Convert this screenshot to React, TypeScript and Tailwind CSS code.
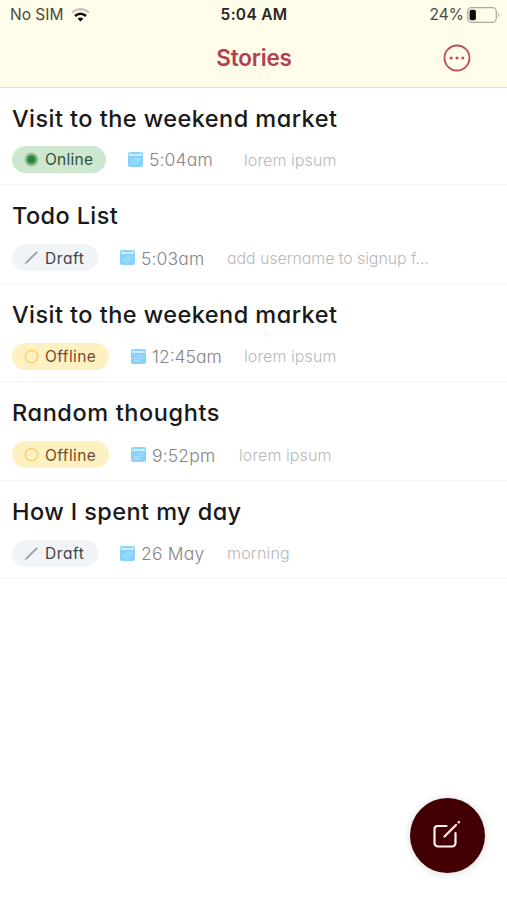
import clsx from "clsx";

type Status = "Online" | "Draft" | "Offline";

type Story = {
  title: string;
  titleClass: string;
  status: Status;
  date: string;
  dateClass: string;
  note: string;
  noteClass: string;
};

const stories: Story[] = [
  {
    title: "Visit to the weekend market",
    titleClass: "tracking-[0.45px] pt-px",
    status: "Online",
    date: "5:04am",
    dateClass: "w-[95px] tracking-[0.15px]",
    note: "lorem ipsum",
    noteClass: "tracking-[0.1px]",
  },
  {
    title: "Todo List",
    titleClass: "tracking-[0.4px]",
    status: "Draft",
    date: "5:03am",
    dateClass: "w-[86px] tracking-[0.15px]",
    note: "add username to signup f...",
    noteClass: "tracking-[-0.1px]",
  },
  {
    title: "Visit to the weekend market",
    titleClass: "tracking-[0.45px]",
    status: "Offline",
    date: "12:45am",
    dateClass: "w-[92px]",
    note: "lorem ipsum",
    noteClass: "tracking-[0.1px]",
  },
  {
    title: "Random thoughts",
    titleClass: "tracking-[0.6px]",
    status: "Offline",
    date: "9:52pm",
    dateClass: "w-[87px] tracking-[0.15px]",
    note: "lorem ipsum",
    noteClass: "tracking-[0.1px]",
  },
  {
    title: "How I spent my day",
    titleClass: "tracking-[0.42px]",
    status: "Draft",
    date: "26 May",
    dateClass: "w-[86px] tracking-[0.2px]",
    note: "morning",
    noteClass: "tracking-[0.2px]",
  },
];

const badgeStyles: Record<Status, string> = {
  Online: "w-[94px] bg-[#cde8cf] text-[#344d3b] tracking-[0.25px]",
  Draft: "w-[86px] bg-[#f1f4f6] text-[#3f4247] tracking-[0.6px]",
  Offline: "w-[97px] bg-[#fef1c1] text-[#75492f] tracking-[0.4px]",
};

function StatusIcon({ status }: { status: Status }) {
  return (
    <svg width="15" height="15" viewBox="0 0 15 15" fill="none">
      {status === "Online" && (
        <>
          <circle cx="7.5" cy="7.5" r="6.8" fill="#86bd8b" />
          <circle cx="7.5" cy="7.5" r="4.3" fill="#2f8540" />
        </>
      )}
      {status === "Draft" && (
        <path d="M1.2 13.5 2.3 11.5 12.6 1.5l1 1L3.3 12.6Z" fill="#a4a6aa" stroke="#a4a6aa" strokeWidth="0.8" />
      )}
      {status === "Offline" && <circle cx="7.5" cy="7.5" r="6.2" stroke="#fbcb5c" strokeWidth="1.3" />}
    </svg>
  );
}

function CalendarIcon() {
  return (
    <svg width="15" height="15" viewBox="0 0 15 15" className="shrink-0">
      <rect width="15" height="15" rx="2" fill="#87d1fb" />
      <path d="M1 3h13" stroke="#e0f4ff" strokeWidth="1.5" />
      <path d="M3 .5v1.4M12 .5v1.4" stroke="#c5eaff" />
      <path d="M6.5 7h6M3 9.3h8M3 11.6h6" stroke="#b3e2ff" strokeWidth="1.3" strokeDasharray="1.7 .5" />
    </svg>
  );
}

function StatusBar() {
  return (
    <div className="grid h-[30px] grid-cols-3 items-center pl-[10px] pr-[7px] text-[#4a4940]">
      <div className="flex items-center gap-2">
        <span className="text-[15.5px]">No SIM</span>
        <svg width="19" height="14" viewBox="0 0 19 14" fill="none">
          <path d="M1 4.7a12.3 12.3 0 0 1 17 0" stroke="#cbc9b9" strokeWidth="2.4" />
          <path d="M4 8a8 8 0 0 1 11 0" stroke="#111" strokeWidth="2.5" />
          <path d="M6.6 10.7a4.3 4.3 0 0 1 5.8 0L9.5 13.6Z" fill="#111" />
        </svg>
      </div>
      <span className="-ml-[2px] text-center text-[15.5px] font-semibold tracking-[0.3px] text-[#27261f]">5:04 AM</span>
      <div className="flex items-center justify-end gap-[3px]">
        <span className="text-[15.5px]">24%</span>
        <svg width="33" height="16" viewBox="0 0 33 16" fill="none">
          <rect x=".7" y=".7" width="28.6" height="14.6" rx="4" stroke="#aaa99b" strokeWidth="1.3" />
          <rect x="2.6" y="2.7" width="6.3" height="10.6" rx="1.8" fill="#0d0d0b" />
          <path d="M31.2 5.7c1.4.7 1.4 4 0 4.6Z" fill="#aaa99b" />
        </svg>
      </div>
    </div>
  );
}

function StoryRow({ story }: { story: Story }) {
  return (
    <li className="h-[98.4px] border-b-[1.5px] border-[#f5f5f6] px-3 pt-4">
      <h2 className={clsx("h-[30px] text-[23.5px] leading-[30px] font-medium whitespace-nowrap text-[#191919]", story.titleClass)}>
        {story.title}
      </h2>
      <div className="mt-[13px] flex h-[27px] items-center whitespace-nowrap">
        <div className={clsx("flex h-[27px] items-center gap-[6px] rounded-full pl-3 text-[15.5px]", badgeStyles[story.status])}>
          <StatusIcon status={story.status} />
          <span className="pt-px">{story.status}</span>
        </div>
        <div className="ml-[22px] flex items-center gap-[6px]">
          <CalendarIcon />
          <span className={clsx("pt-0.5 text-[17.5px] font-light text-[#858585]", story.dateClass)}>{story.date}</span>
        </div>
        <span className={clsx("text-[16px] font-light text-[#b8b8ba]", story.noteClass)}>{story.note}</span>
      </div>
    </li>
  );
}

export default function App() {
  return (
    <main className="relative h-[900px] w-full overflow-hidden bg-white font-['Inter',sans-serif]">
      <header className="h-[88px] border-b-[1.5px] border-[#e3e1d2] bg-[#fffcea]">
        <StatusBar />
        <div className="grid h-[56px] grid-cols-3 items-center">
          <h1 className="col-start-2 pl-px text-center text-[22.5px] font-semibold tracking-[-0.2px] text-[#b4404f]">Stories</h1>
          <button className="mr-[36px] justify-self-end" aria-label="More options">
            <svg width="28" height="28" viewBox="0 0 28 28" fill="none">
              <circle cx="14" cy="14" r="12.5" stroke="#b94d5b" strokeWidth="1.8" />
              <circle cx="8.2" cy="14" r="1.5" fill="#b94d5b" />
              <circle cx="14" cy="14" r="1.5" fill="#b94d5b" />
              <circle cx="19.8" cy="14" r="1.5" fill="#b94d5b" />
            </svg>
          </button>
        </div>
      </header>
      <ul className="-mt-px [font-feature-settings:'cv11'_1]">
        {stories.map((story, i) => (
          <StoryRow key={i} story={story} />
        ))}
      </ul>
      <button
        className="absolute right-[22px] bottom-[27px] flex size-[75px] items-center justify-center rounded-full bg-[#430004] shadow-[0_1px_8px_rgba(0,0,0,0.15)]"
        aria-label="New story"
      >
        <svg width="30" height="30" viewBox="0 0 30 30" fill="none" className="-mt-px mr-[3px]">
          <path d="M15.5 6H6.5A3 3 0 0 0 3.5 9V23A3.5 3.5 0 0 0 7 26.5H21A3.5 3.5 0 0 0 24.5 23V13" stroke="#fff1ee" strokeWidth="2.2" strokeLinecap="round" />
          <path d="M13.5 16.5 25 5" stroke="#ffe9d4" strokeWidth="2.3" strokeLinecap="round" />
          <path d="M27.6 2.4 28 2" stroke="#ffe9d4" strokeWidth="2.3" strokeLinecap="round" />
        </svg>
      </button>
    </main>
  );
}
